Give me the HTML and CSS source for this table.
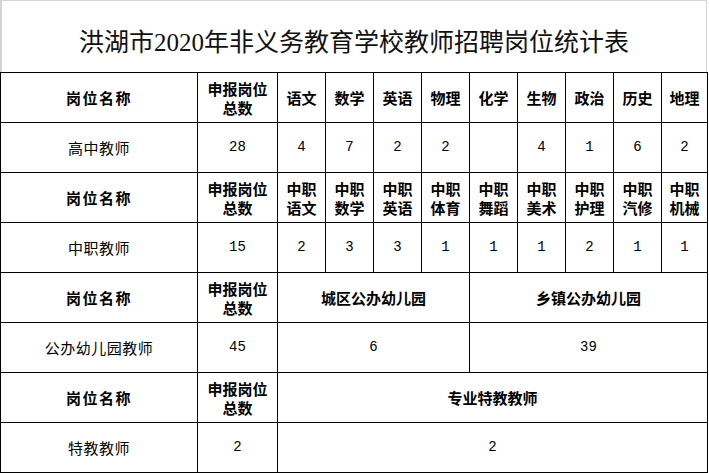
FILE: index.html
```html
<!DOCTYPE html>
<html lang="zh-CN">
<head>
<meta charset="utf-8">
<title>洪湖市2020年非义务教育学校教师招聘岗位统计表</title>
<link rel="stylesheet" href="styles.css">
</head>
<body>
<div class="sheet">
  <div class="title">洪湖市2020年非义务教育学校教师招聘岗位统计表</div>
  <table class="grid">
    <colgroup>
      <col class="c-name"><col class="c-total">
      <col class="c-sub"><col class="c-sub"><col class="c-sub"><col class="c-sub">
      <col class="c-sub"><col class="c-sub"><col class="c-sub"><col class="c-sub">
      <col class="c-last">
    </colgroup>
    <tbody>
      <tr class="head">
        <td class="spaced">岗位名称</td>
        <td>申报岗位<br>总数</td>
        <td>语文</td><td>数学</td><td>英语</td><td>物理</td><td>化学</td><td>生物</td><td>政治</td><td>历史</td><td>地理</td>
      </tr>
      <tr class="data">
        <td class="label">高中教师</td>
        <td class="num">28</td>
        <td class="num">4</td><td class="num">7</td><td class="num">2</td><td class="num">2</td><td class="num"></td><td class="num">4</td><td class="num">1</td><td class="num">6</td><td class="num">2</td>
      </tr>
      <tr class="head">
        <td class="spaced">岗位名称</td>
        <td>申报岗位<br>总数</td>
        <td>中职<br>语文</td><td>中职<br>数学</td><td>中职<br>英语</td><td>中职<br>体育</td><td>中职<br>舞蹈</td><td>中职<br>美术</td><td>中职<br>护理</td><td>中职<br>汽修</td><td>中职<br>机械</td>
      </tr>
      <tr class="data">
        <td class="label">中职教师</td>
        <td class="num">15</td>
        <td class="num">2</td><td class="num">3</td><td class="num">3</td><td class="num">1</td><td class="num">1</td><td class="num">1</td><td class="num">2</td><td class="num">1</td><td class="num">1</td>
      </tr>
      <tr class="head">
        <td class="spaced">岗位名称</td>
        <td>申报岗位<br>总数</td>
        <td colspan="4">城区公办幼儿园</td>
        <td colspan="5">乡镇公办幼儿园</td>
      </tr>
      <tr class="data">
        <td class="label">公办幼儿园教师</td>
        <td class="num">45</td>
        <td class="num" colspan="4">6</td>
        <td class="num" colspan="5">39</td>
      </tr>
      <tr class="head">
        <td class="spaced">岗位名称</td>
        <td>申报岗位<br>总数</td>
        <td colspan="9">专业特教教师</td>
      </tr>
      <tr class="data">
        <td class="label">特教教师</td>
        <td class="num">2</td>
        <td class="num" colspan="9">2</td>
      </tr>
    </tbody>
  </table>
</div>
</body>
</html>
```
FILE: styles.css
```css
html, body {
  margin: 0;
  padding: 0;
  background: #ffffff;
}
body {
  font-family: "Noto Sans CJK SC", sans-serif;
  color: #000;
}
.sheet {
  width: 707px;
}
.title {
  box-sizing: border-box;
  height: 72px;
  border-top: 1px solid #d4d4d4;
  border-left: 2px solid #d4d4d4;
  border-right: 1px solid #d4d4d4;
  padding-top: 6px;
  display: flex;
  align-items: center;
  justify-content: center;
  font-family: "Liberation Serif", "Noto Sans CJK SC", serif;
  font-size: 25px;
  color: #111;
}
.grid {
  width: 707px;
  border-collapse: collapse;
  table-layout: fixed;
}
.c-name { width: 197px; }
.c-total { width: 80px; }
.c-sub { width: 48px; }
.c-last { width: 46px; }
.grid td {
  border: 1px solid #000;
  height: 49px;
  padding: 0;
  text-align: center;
  vertical-align: middle;
  overflow: hidden;
}
.head td {
  font-weight: 700;
  font-size: 15px;
  line-height: 19px;
}
.head td.spaced {
  letter-spacing: 1.5px;
}
.data td {
  font-size: 15px;
  line-height: 19px;
}
.data td.num {
  font-family: "Liberation Mono", monospace;
  font-size: 14px;
}
.data td.label {
  letter-spacing: 0.5px;
}
```
